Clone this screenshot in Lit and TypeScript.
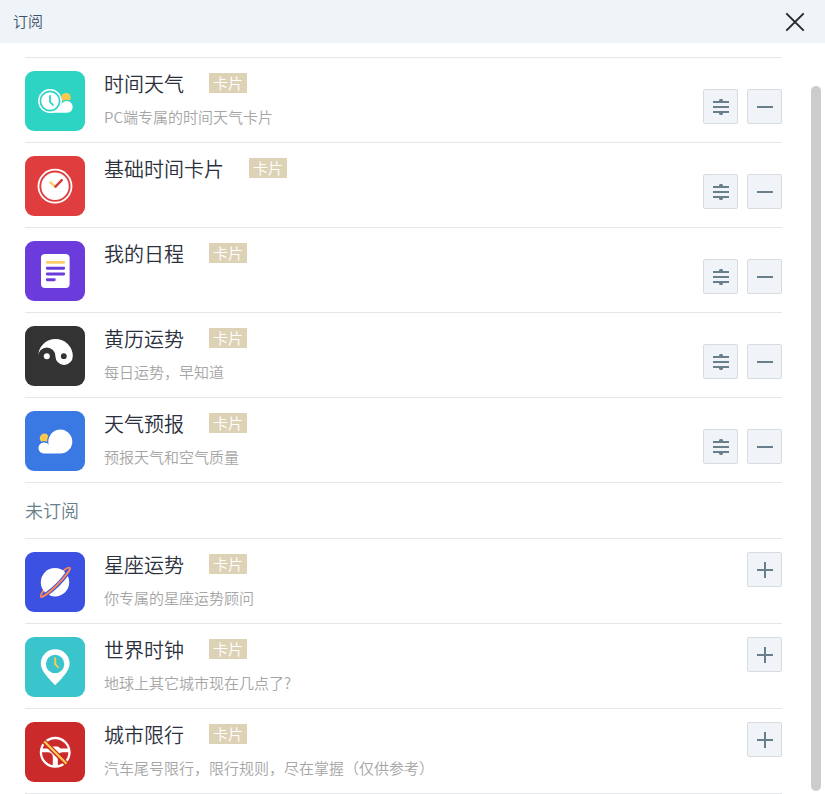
import { LitElement, html, svg, css, nothing } from "lit";
import { customElement, property } from "lit/decorators.js";

interface Entry {
  icon: string;
  color: string;
  title: string;
  desc?: string;
}

const subscribed: Entry[] = [
  { icon: "timeWeather", color: "#2dd4c4", title: "时间天气", desc: "PC端专属的时间天气卡片" },
  { icon: "clock", color: "#e03e3e", title: "基础时间卡片" },
  { icon: "schedule", color: "#6b3cdb", title: "我的日程" },
  { icon: "almanac", color: "#333333", title: "黄历运势", desc: "每日运势，早知道" },
  { icon: "forecast", color: "#3a78e4", title: "天气预报", desc: "预报天气和空气质量" },
];

const available: Entry[] = [
  { icon: "planet", color: "#3c50e2", title: "星座运势", desc: "你专属的星座运势顾问" },
  { icon: "worldClock", color: "#3ac5cd", title: "世界时钟", desc: "地球上其它城市现在几点了?" },
  { icon: "traffic", color: "#cb2a2a", title: "城市限行", desc: "汽车尾号限行，限行规则，尽在掌握（仅供参考）" },
];

const art: Record<string, unknown> = {
  timeWeather: svg`
    <circle cx="41" cy="26.600" r="4.700" fill="#fbc94c"/>
    <circle cx="41.800" cy="35.900" r="7.200" fill="#2dd4c4"/>
    <path d="M25 41.800V34h11.200a5.900 5.900 0 1 1 5.400 7.800z" fill="#fff"/>
    <circle cx="25" cy="30" r="11.900" fill="#fff"/>
    <circle cx="25" cy="30" r="9.600" fill="#fff" stroke="#2dd4c4" stroke-width="1.700"/>
    <path d="M25 24.800v6l3 3.200" fill="none" stroke="#2dd4c4" stroke-width="1.800" stroke-linecap="round" stroke-linejoin="round"/>`,
  clock: svg`
    <circle cx="30" cy="30.200" r="17.400" fill="#fff"/>
    <circle cx="30" cy="30.200" r="14.700" fill="#fff" stroke="#e03e3e" stroke-width="1.900"/>
    <path d="M25.300 26.400l5 4.500" stroke="#fbd068" stroke-width="2.400" stroke-linecap="round"/>
    <path d="M30.500 30.600l6.300-6.500" stroke="#d93b3b" stroke-width="2.400" stroke-linecap="round"/>`,
  schedule: svg`
    <rect x="16" y="13" width="28.600" height="34" rx="4" fill="#fff"/>
    <g stroke-width="2.900" stroke-linecap="round">
      <path d="M22.300 21.400h16.400" stroke="#fdce6b"/>
      <path d="M22.300 27.200h16.400M22.300 33h16.400M22.300 38.800h7" stroke="#6b3cdb"/>
    </g>`,
  almanac: svg`
    <path d="M13.200 30.200A17.300 17.300 0 0 1 47.800 30.200A8.700 8.700 0 0 1 30.400 30.200A8.600 8.600 0 0 0 13.200 30.200z" fill="#fff"/>
    <circle cx="21.800" cy="30.200" r="3" fill="#fff"/>
    <circle cx="38.800" cy="30.200" r="2.900" fill="#333"/>`,
  forecast: svg`
    <circle cx="19.400" cy="27.200" r="4.600" fill="#fbc94c"/>
    <circle cx="35.400" cy="30.600" r="13.300" fill="#3a78e4"/>
    <circle cx="19" cy="37" r="6.900" fill="#3a78e4"/>
    <path d="M19 42.600a5.600 5.600 0 1 1 4.800-8.600A12 12 0 1 1 35.400 42.600z" fill="#fff"/>`,
  planet: svg`
    <ellipse cx="30.300" cy="30.200" rx="20.400" ry="3.200" transform="rotate(-45 30.300 30.200)" fill="none" stroke="#f98655" stroke-width="1.700"/>
    <circle cx="30" cy="30.200" r="14.200" fill="#fff"/>
    <g transform="rotate(-45 30.300 30.200)" fill="none">
      <path d="M15.300 32.400A20.400 3.200 0 0 0 45.300 32.400" stroke="#3c50e2" stroke-width="4.200"/>
      <path d="M9.900 30.200A20.400 3.200 0 0 0 50.700 30.200" stroke="#f98655" stroke-width="1.900"/>
    </g>`,
  worldClock: svg`
    <path d="M30.200 48.200C25 43 15.800 34.500 15.800 26.600a14.400 14.400 0 0 1 28.800 0C44.600 34.500 35.400 43 30.200 48.200z" fill="#fff"/>
    <circle cx="30.100" cy="26.900" r="9.200" fill="#3ac5cd"/>
    <path d="M30.200 21.200v6l2.700 3" fill="none" stroke="#fbc94c" stroke-width="2" stroke-linecap="round" stroke-linejoin="round"/>`,
  traffic: svg`
    <circle cx="30.200" cy="30.300" r="14.300" fill="none" stroke="#fff" stroke-width="2.300"/>
    <path d="M16 26.500h8.500c1.500 0 2-2 3.800-2h4c1.700 0 2.200 2 3.800 2H44.500v3.800H38c-3 0-5.200 1.500-5.200 4.500V44.500h-5V34.800c0-3-2.200-4.500-5.200-4.500H16z" fill="#fff"/>
    <path d="M17.800 18.200l25 25" stroke="#cb2a2a" stroke-width="4.800"/>
    <path d="M19.200 19.400l22.200 22.200" stroke="#fbc94c" stroke-width="2.200"/>`,
};

@customElement("icon-button")
class IconButton extends LitElement {
  @property() kind = "add";

  static styles = css`
    :host { display: block; }
    .button {
      display: block;
      box-sizing: border-box;
      width: 35px;
      height: 35px;
      padding: 0;
      border: 1px solid #d8dcdf;
      border-radius: 2px;
      background: #f0f4f8;
    }
    .glyph { display: block; width: 33px; height: 33px; }
  `;

  render() {
    const shapes: Record<string, unknown> = {
      add: svg`<path d="M9 16h16v2H9zM16 9h2v16h-2z"/>`,
      remove: svg`<path d="M9 16h16v2H9z"/>`,
      sort: svg`<path d="M9 11h16v2H9zM9 16h16v2H9zM9 21h16v2H9zM15 11v-1l1-1h2l1 1v1zM15 23v1l1 1h2l1-1v-1z"/>`,
    };
    return html`<button class="button">
      <svg class="glyph" viewBox="0 0 33 33" fill="#6a7f8c">${shapes[this.kind]}</svg>
    </button>`;
  }
}

@customElement("card-row")
class CardRow extends LitElement {
  @property({ attribute: false }) entry!: Entry;
  @property({ type: Boolean }) active = false;

  static styles = css`
    :host { display: block; }
    .row {
      display: flex;
      box-sizing: border-box;
      height: 85px;
      padding-top: 13px;
      border-bottom: 1px solid #e4e6e8;
    }
    .icon { display: block; width: 60px; height: 60px; flex: none; }
    .text { flex: 1; padding-left: 19px; white-space: nowrap; }
    .heading { display: flex; gap: 25px; height: 26px; }
    .title { font-size: 20px; line-height: 26px; color: #2b303d; }
    .tag {
      width: 38px;
      height: 20px;
      margin-top: 2px;
      background: #ddd2b6;
      color: #fff;
      font-size: 15px;
      line-height: 20px;
      text-align: center;
    }
    .desc { margin-top: 10px; font-size: 15px; line-height: 20px; color: #a6a6a6; }
    .actions { display: flex; gap: 9px; }
    .lowered { padding-top: 18px; }
  `;

  render() {
    const { icon, color, title, desc } = this.entry;
    return html`<div class="row">
      <svg class="icon" viewBox="0 0 60 60"><rect width="60" height="60" rx="9" fill=${color}></rect>${art[icon]}</svg>
      <div class="text">
        <div class="heading"><span class="title">${title}</span><span class="tag">卡片</span></div>
        ${desc ? html`<div class="desc">${desc}</div>` : nothing}
      </div>
      <div class="actions ${this.active ? "lowered" : ""}">
        ${this.active
          ? html`<icon-button kind="sort"></icon-button><icon-button kind="remove"></icon-button>`
          : html`<icon-button kind="add"></icon-button>`}
      </div>
    </div>`;
  }
}

@customElement("app-root")
class AppRoot extends LitElement {
  static styles = css`
    :host {
      display: flex;
      flex-direction: column;
      height: 794px;
      overflow: hidden;
      background: #fff;
      font-family: "Noto Sans CJK SC", sans-serif;
      font-weight: 350;
    }
    .header {
      display: flex;
      flex: none;
      align-items: center;
      justify-content: space-between;
      height: 43px;
      padding: 0 20px 0 13px;
      box-sizing: border-box;
      background: #eff4f8;
      color: #3f556a;
      font-size: 15px;
    }
    .caption { padding-bottom: 2px; }
    .close { display: block; width: 20px; height: 20px; }
    .body { display: flex; flex: 1; min-height: 0; padding-top: 14px; }
    .list { flex: 1; padding-left: 25px; }
    .first { border-top: 1px solid #e4e6e8; }
    .section {
      box-sizing: border-box;
      height: 56px;
      border-bottom: 1px solid #e4e6e8;
      font-size: 18px;
      line-height: 55px;
      color: #6a7f8c;
    }
    .track { width: 10px; padding: 29px 4px 3px 29px; }
    .thumb { height: 100%; border-radius: 5px; background: #ccc; }
  `;

  render() {
    return html`
      <div class="header">
        <span class="caption">订阅</span>
        <svg class="close" viewBox="0 0 20 20"><path d="M1.300 1.300l17.400 17.400M18.700 1.300L1.300 18.700" stroke="#262626" stroke-width="1.900"/></svg>
      </div>
      <div class="body">
        <div class="list">
          <div class="first">${subscribed.map((e) => html`<card-row .entry=${e} active></card-row>`)}</div>
          <div class="section">未订阅</div>
          ${available.map((e) => html`<card-row .entry=${e}></card-row>`)}
        </div>
        <div class="track"><div class="thumb"></div></div>
      </div>
    `;
  }
}
